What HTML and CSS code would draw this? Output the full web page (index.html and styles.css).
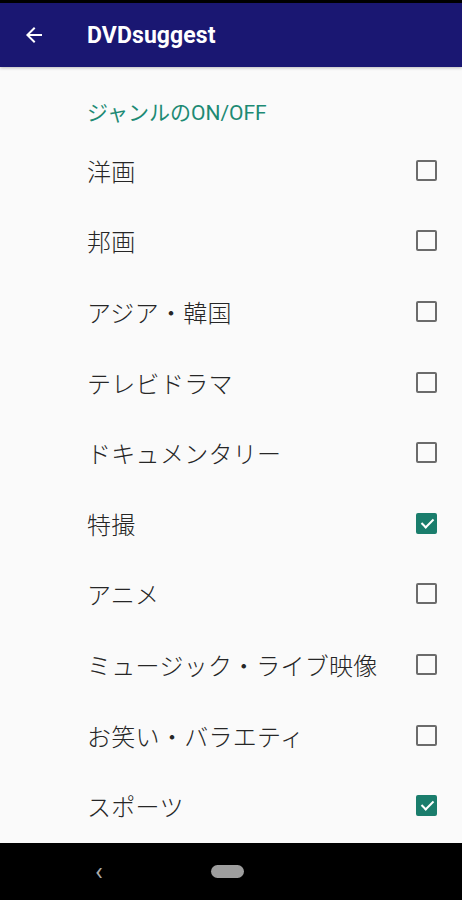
FILE: index.html
```html
<!DOCTYPE html>
<html lang="ja">
<head>
  <meta charset="UTF-8">
  <meta name="viewport" content="width=device-width, initial-scale=1.0">
  <title>DVDsuggest</title>
  <link rel="stylesheet" href="styles.css">
</head>
<body>
  <div class="screen">
    <div class="status"></div>
    <header class="appbar">
      <svg class="back" viewBox="0 0 24 24" width="24" height="24">
        <path d="M20 11H7.83l5.59-5.59L12 4l-8 8 8 8 1.41-1.41L7.83 13H20v-2z" fill="#fff"/>
      </svg>
      <h1>DVDsuggest</h1>
    </header>

    <main class="prefs">
      <div class="category">ジャンルのON/OFF</div>
      <div id="genres"></div>
    </main>

    <nav class="navbar">
      <span class="nav-back">&lsaquo;</span>
      <span class="nav-home"></span>
    </nav>
  </div>

  <script>
    // Genre list and their switch states
    const genres = [
      { name: '洋画', on: false },
      { name: '邦画', on: false },
      { name: 'アジア・韓国', on: false },
      { name: 'テレビドラマ', on: false },
      { name: 'ドキュメンタリー', on: false },
      { name: '特撮', on: true },
      { name: 'アニメ', on: false },
      { name: 'ミュージック・ライブ映像', on: false },
      { name: 'お笑い・バラエティ', on: false },
      { name: 'スポーツ', on: true }
    ];

    const list = document.getElementById('genres');
    genres.forEach(genre => {
      const row = document.createElement('label');
      row.className = 'row';
      row.innerHTML = `
        <span class="title">${genre.name}</span>
        <input type="checkbox" ${genre.on ? 'checked' : ''}>
        <span class="box"></span>
      `;
      list.appendChild(row);
    });
  </script>
</body>
</html>
```

FILE: styles.css
```css
body {
  margin: 0;
  padding: 0;
  background: #000;
  font-family: Roboto, "Noto Sans CJK JP", sans-serif;
}
.screen {
  width: 462px;
  height: 900px;
  display: flex;
  flex-direction: column;
  background: #fafafa;
  overflow: hidden;
}
.status {
  height: 3px;
  background: #000;
}
.appbar {
  height: 64px;
  background: #1a1772;
  display: flex;
  align-items: center;
  box-shadow: 0 1px 3px rgba(0, 0, 0, 0.25);
}
.back {
  margin-left: 22px;
  width: 24px;
  height: 24px;
}
.appbar h1 {
  margin: 1px 0 0 41px;
  color: #fff;
  font-size: 23px;
  font-weight: 700;
  letter-spacing: 0.1px;
}
.prefs {
  flex: 1;
  overflow: hidden;
}
.category {
  height: 68px;
  padding-left: 87px;
  box-sizing: border-box;
  padding-top: 32px;
  color: #1d8a74;
  font-size: 21px;
  line-height: 28px;
}
.row {
  height: 70.6px;
  display: flex;
  align-items: center;
  padding: 0 25px 0 87px;
  position: relative;
}
.title {
  flex: 1;
  color: #262626;
  font-size: 24px;
  font-weight: 300;
  letter-spacing: 0.3px;
}
.row input {
  display: none;
}
.box {
  width: 17px;
  height: 17px;
  border: 2px solid #6b6b6b;
  border-radius: 2px;
}
.row input:checked + .box {
  background: #1a7d6c;
  border-color: #1a7d6c;
}
.row input:checked + .box::after {
  content: "";
  display: block;
  width: 5px;
  height: 10px;
  margin: 1px 0 0 6px;
  border: solid #fff;
  border-width: 0 2.5px 2.5px 0;
  transform: rotate(45deg);
}
.navbar {
  height: 57px;
  background: #000;
  display: flex;
  align-items: center;
  flex-shrink: 0;
}
.nav-back {
  color: #aaa;
  font-size: 26px;
  margin-left: 95px;
  line-height: 1;
  margin-top: -2px;
}
.nav-home {
  width: 33px;
  height: 13px;
  background: #9e9e9e;
  border-radius: 7px;
  margin-left: 108px;
}
```
